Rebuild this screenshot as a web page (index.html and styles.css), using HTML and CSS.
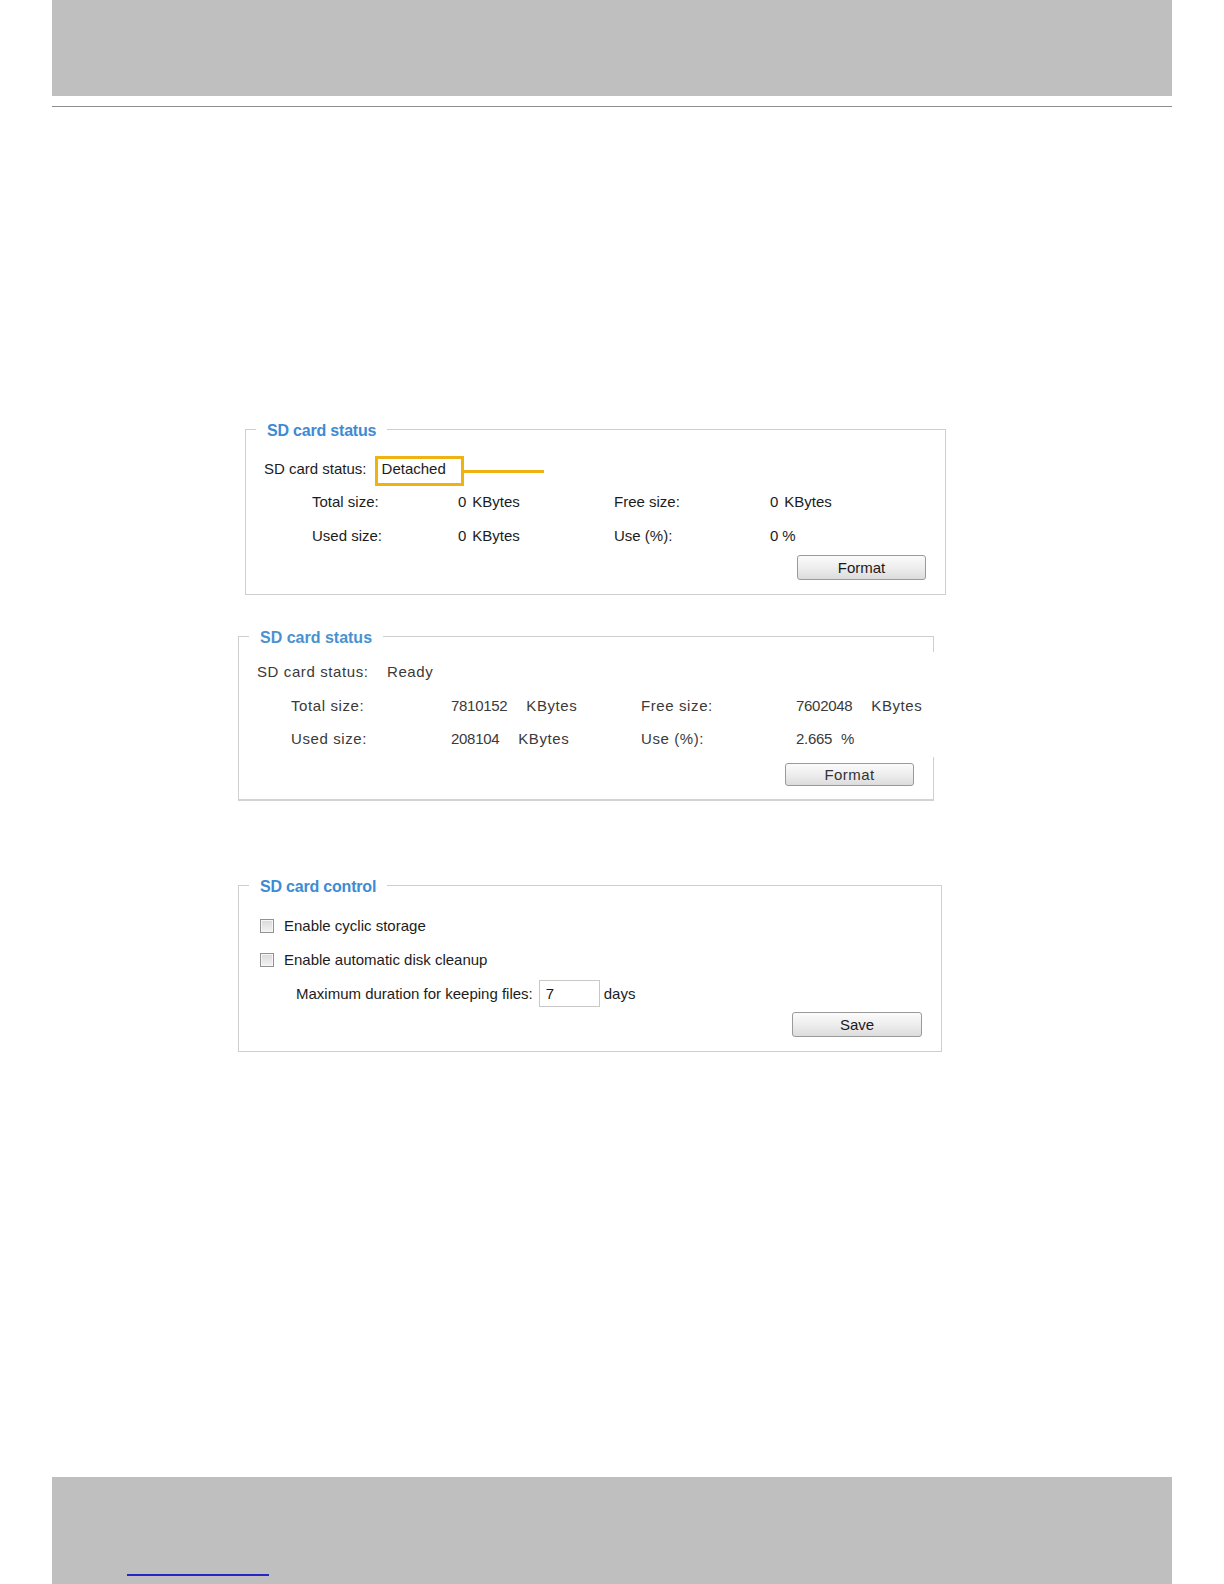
FILE: index.html
```html
<!DOCTYPE html>
<html lang="en">
<head>
  <meta charset="UTF-8">
  <meta name="viewport" content="width=device-width, initial-scale=1.0">
  <title>SD Card Management</title>
  <link rel="stylesheet" href="styles.css">
</head>
<body>
<div class="page-header"></div>
<div class="header-rule"></div>

<div class="content">
  <!-- status panel with the "Detached" callout -->
  <fieldset class="panel panel-detached">
    <legend>SD card status</legend>
    <div class="panel-body">
      <div class="status-row">
        <span class="status-label">SD card status:</span>
        <span class="callout">Detached</span>
        <span class="callout-line"></span>
      </div>
      <div class="size-grid">
        <span>Total size:</span>
        <span><span class="num">0</span><span class="unit">KBytes</span></span>
        <span>Free size:</span>
        <span><span class="num">0</span><span class="unit">KBytes</span></span>
        <span>Used size:</span>
        <span><span class="num">0</span><span class="unit">KBytes</span></span>
        <span>Use (%):</span>
        <span><span class="num">0</span><span class="unit pct">%</span></span>
      </div>
      <div class="button-row"><button>Format</button></div>
    </div>
  </fieldset>

  <!-- status panel, card ready -->
  <fieldset class="panel panel-ready">
    <legend>SD card status</legend>
    <div class="panel-body">
      <div class="status-row">
        <span class="status-label">SD card status:</span>
        <span>Ready</span>
      </div>
      <div class="size-grid">
        <span>Total size:</span>
        <span><span class="num">7810152</span><span class="unit">KBytes</span></span>
        <span>Free size:</span>
        <span><span class="num">7602048</span><span class="unit">KBytes</span></span>
        <span>Used size:</span>
        <span><span class="num">208104</span><span class="unit">KBytes</span></span>
        <span>Use (%):</span>
        <span><span class="num">2.665</span><span class="unit pct">%</span></span>
      </div>
      <div class="button-row"><button>Format</button></div>
    </div>
  </fieldset>

  <!-- control panel -->
  <fieldset class="panel panel-control">
    <legend>SD card control</legend>
    <div class="panel-body">
      <label class="check-row"><input type="checkbox">Enable cyclic storage</label>
      <label class="check-row"><input type="checkbox">Enable automatic disk cleanup</label>
      <div class="keep-row">
        <span>Maximum duration for keeping files:</span>
        <input type="text" id="keepDays" value="7">
        <span class="days">days</span>
      </div>
      <div class="button-row"><button>Save</button></div>
    </div>
  </fieldset>
</div>

<div class="page-footer">
  <span class="footer-link"></span>
</div>
</body>
</html>
```

FILE: styles.css
```css
body {
  margin: 0;
  min-height: 100vh;
  display: flex;
  flex-direction: column;
  font-family: "Liberation Sans", Arial, sans-serif;
  font-size: 15px;
  color: #1c1c1c;
  background: #ffffff;
}
.page-header {
  height: 96px;
  margin: 0 52px;
  background: #bfbfbf;
}
.header-rule {
  margin: 10px 52px 0;
  border-top: 1px solid #8e8e8e;
}
.content {
  padding-top: 310px;
}
.panel {
  box-sizing: border-box;
  margin: 0;
  padding: 0;
  min-width: 0;
  border: 1px solid #cfcfcf;
}
.panel legend {
  margin-left: 10px;
  padding: 4px 11px 0;
  line-height: 20px;
  font-size: 16px;
  font-weight: bold;
  letter-spacing: -0.2px;
  color: #3d8bd3;
}
.panel-body {
  line-height: 20px;
  white-space: nowrap;
}
.status-row {
  display: flex;
  align-items: flex-start;
}
.button-row {
  display: flex;
  justify-content: flex-end;
}
.panel button {
  box-sizing: border-box;
  width: 129px;
  height: 25px;
  padding: 0;
  font-family: inherit;
  font-size: 15px;
  color: #1a1a1a;
  border: 1px solid #9a9a9a;
  border-radius: 3px;
  background: linear-gradient(#fbfbfb, #ececec 55%, #dcdcdc);
}
.size-grid {
  display: grid;
}

/* panel 1: detached */
.panel-detached {
  width: 701px;
  margin-left: 245px;
}
.panel-detached .panel-body {
  padding: 15px 19px 14px 18px;
}
.panel-detached .status-label {
  padding-top: 3px;
}
.callout {
  box-sizing: border-box;
  width: 89px;
  height: 30px;
  margin-left: 8px;
  padding-left: 4px;
  border: 3px solid #efb211;
}
.callout-line {
  align-self: center;
  width: 80px;
  height: 3px;
  background: #efb211;
}
.panel-detached .size-grid {
  margin: 6px 0 0 48px;
  grid-template-columns: 146px 156px 156px auto;
  row-gap: 14px;
}
.panel-detached .unit {
  margin-left: 6px;
}
.panel-detached .unit.pct {
  margin-left: 4px;
}
.panel-detached .button-row {
  margin-top: 9px;
}

/* panel 2: ready */
.panel-ready {
  width: 696px;
  margin: 29px 0 0 238px;
  border-bottom: 2px solid #d3d3d3;
  color: #3a3a3a;
  letter-spacing: 0.6px;
}
.panel-ready legend {
  color: #4a91cf;
  letter-spacing: 0;
}
.panel-ready .panel-body {
  position: relative;
  padding: 14px 19px 13px 18px;
}
.panel-ready .panel-body::after {
  content: "";
  position: absolute;
  top: 4px;
  right: -1px;
  width: 1px;
  height: 105px;
  background: #ffffff;
}
.panel-ready .status-label {
  width: 130px;
}
.panel-ready .size-grid {
  margin: 14px 0 0 34px;
  grid-template-columns: 160px 190px 155px auto;
  row-gap: 13px;
}
.panel-ready .num {
  letter-spacing: -0.3px;
}
.panel-ready .unit {
  margin-left: 19px;
}
.panel-ready .unit.pct {
  margin-left: 9px;
}
.panel-ready .button-row {
  margin-top: 14px;
}
.panel-ready button {
  height: 23px;
  color: #333333;
  letter-spacing: 0.4px;
}

/* panel 3: control */
.panel-control {
  width: 704px;
  margin: 72px 0 0 238px;
}
.panel-control .panel-body {
  padding: 19px 19px 14px 21px;
}
.check-row {
  display: flex;
  align-items: center;
  height: 20px;
}
.check-row + .check-row {
  margin-top: 14px;
}
.check-row input {
  appearance: none;
  box-sizing: border-box;
  width: 14px;
  height: 14px;
  margin: 0 10px 0 0;
  border: 1px solid #929292;
  background: linear-gradient(#d9d9d9, #f3f3f3);
  box-shadow: inset 0 0 0 1px #f6f6f6;
}
.keep-row {
  display: flex;
  align-items: center;
  height: 27px;
  margin: 10px 0 0 36px;
}
.keep-row input {
  box-sizing: border-box;
  width: 61px;
  height: 27px;
  margin-left: 6px;
  padding: 0 0 0 6px;
  font-family: inherit;
  font-size: 15px;
  color: #1a1a1a;
  border: 1px solid #c9c9c9;
  outline: none;
}
.days {
  margin-left: 4px;
}
.panel-control .button-row {
  margin-top: 5px;
}
.panel-control button {
  width: 130px;
}

.page-footer {
  height: 107px;
  margin: auto 52px 0;
  background: #bfbfbf;
}
.footer-link {
  display: block;
  width: 142px;
  margin: 97px 0 0 75px;
  border-bottom: 2px solid #2626c4;
}
```
